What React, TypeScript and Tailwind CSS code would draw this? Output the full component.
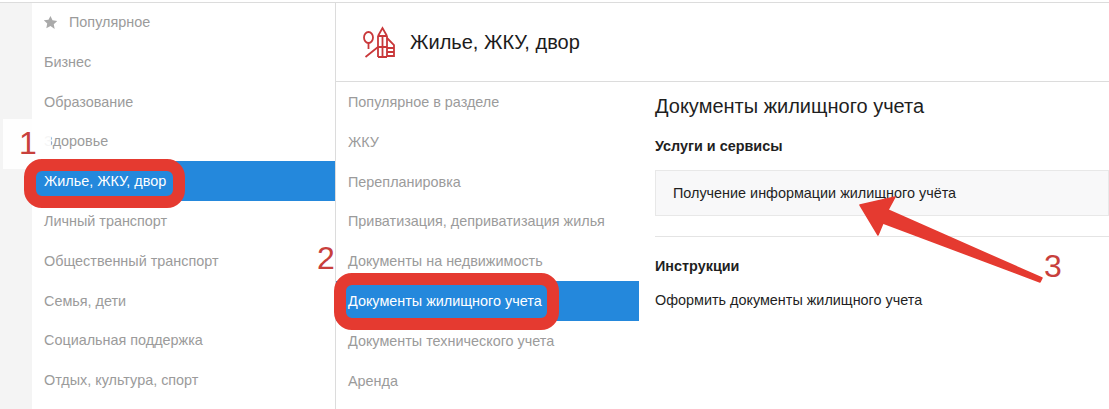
const font = { fontFamily: '"Liberation Sans", Arial, sans-serif' };

const left = ["Бизнес", "Образование", "Здоровье", "Жилье, ЖКУ, двор", "Личный транспорт", "Общественный транспорт", "Семья, дети", "Социальная поддержка", "Отдых, культура, спорт"];
const middle = ["Популярное в разделе", "ЖКУ", "Перепланировка", "Приватизация, деприватизация жилья", "Документы на недвижимость", "Документы жилищного учета", "Документы технического учета", "Аренда"];

function Row({ label, active, px }: { label: string; active: boolean; px: string }) {
  return (
    <div className={`flex h-[39.8px] shrink-0 items-center ${px} pt-[2px] text-[14.4px] ${active ? "bg-[#2488dc] text-white" : "text-[#9b9b9b]"}`}>
      {label}
    </div>
  );
}

function HouseIcon() {
  return (
    <svg width="32" height="32" viewBox="0 0 32 32" fill="none" stroke="#c9383a" strokeWidth="1.800">
      <ellipse cx="5.500" cy="11.500" rx="4.500" ry="5.500" />
      <path d="M5.500 17v6M2.500 31 15 21" />
      <path d="M15 10 19.500 2 24 10M14.500 10h10M15 10v21M24 10v21M19.500 10v21M15 21h9M15 31h9" />
      <path d="M24 12l7 7v12M24 22h7M24 26h7M24 30h7" />
    </svg>
  );
}

export default function App() {
  return (
    <div className="relative h-[409px] w-[1109px] overflow-hidden bg-white pt-[2px]" style={font}>
      <div className="flex h-full border-t border-[#dcdcdc]">
        <div className="w-[32px] shrink-0 bg-[#f4f4f4]" />
        <div className="flex w-[304px] shrink-0 flex-col border-r border-[#dcdcdc]">
          <div className="flex h-[38.800px] shrink-0 items-center gap-[12px] pl-[12px] text-[14.4px] text-[#9b9b9b]">
            <svg width="13" height="13" viewBox="0 0 24 24" fill="#aaaaaa" className="scale-[1.1]">
              <path d="M12 1l3.400 7.300 7.900 1-5.800 5.500 1.500 7.900L12 18l-7 3.700 1.500-7.900L.7 8.300l7.900-1z" />
            </svg>
            Популярное
          </div>
          {left.map((l) => (
            <Row key={l} label={l} active={l === "Жилье, ЖКУ, двор"} px="pl-[12px]" />
          ))}
        </div>
        <div className="flex min-w-0 flex-1 flex-col">
          <div className="flex h-[79px] shrink-0 items-center gap-[15px] border-b border-[#dcdcdc] pl-[27px] text-[20px] text-[#1c1c1c]">
            <HouseIcon />
            <span>Жилье, ЖКУ, двор</span>
          </div>
          <div className="flex min-h-0 flex-1">
            <div className="flex w-[303px] shrink-0 flex-col">
              {middle.map((m) => (
                <Row key={m} label={m} active={m === "Документы жилищного учета"} px="pl-[12px]" />
              ))}
            </div>
            <div className="min-w-0 flex-1 pl-[16px] pt-[12px] text-[#1f1f1f]">
              <div className="text-[20px] leading-[24px]">Документы жилищного учета</div>
              <div className="mt-[20px] text-[14.4px] font-bold leading-[16px]">Услуги и сервисы</div>
              <div className="mt-[16px] flex h-[46px] items-center border border-[#e8e8e8] bg-[#f8f8f9] pl-[17px] pt-[2px] text-[14.4px]">
                Получение информации жилищного учёта
              </div>
              <div className="mt-[20px] border-t border-[#e4e4e4] pt-[21px] text-[14.4px] font-bold leading-[16px]">Инструкции</div>
              <div className="mt-[18px] text-[14.4px] leading-[16px]">Оформить документы жилищного учета</div>
            </div>
          </div>
        </div>
      </div>

      <div className="absolute left-[3px] top-[119px] h-[50px] w-[48px] bg-white/90" />
      <div className="absolute left-[19px] top-[125px] text-[32px] font-normal leading-[36px] text-[#c8403c]">1</div>
      <div className="absolute left-[317px] top-[240px] text-[32px] font-normal leading-[36px] text-[#c8403c]">2</div>
      <div className="absolute left-[1044px] top-[248px] text-[32px] font-normal leading-[36px] text-[#c8403c]">3</div>
      <div className="absolute left-[24px] top-[159px] h-[49px] w-[161px] rounded-[18px] border-[12px] border-[#e53a30]" />
      <div className="absolute left-[334px] top-[273px] h-[57px] w-[225px] rounded-[18px] border-[12px] border-[#e53a30]" />
      <svg className="absolute left-0 top-0" width="1109" height="409" fill="#e53a30">
        <path d="M860 205 895 197 888 210 1042 278 1040 282 883 223 878 235Z" stroke="#e53a30" strokeWidth="1.500" strokeLinejoin="round" />
      </svg>
    </div>
  );
}
